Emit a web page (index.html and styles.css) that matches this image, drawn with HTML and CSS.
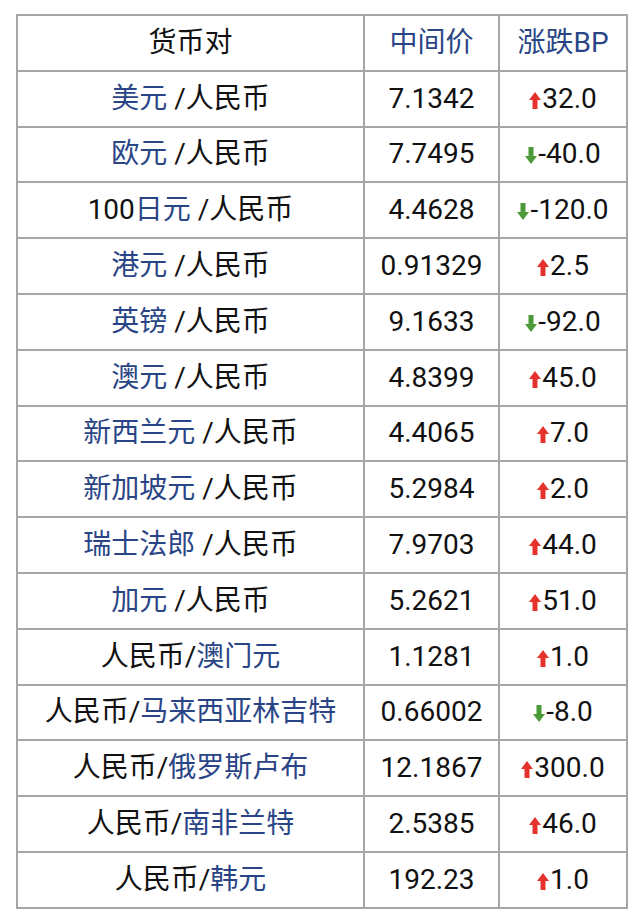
FILE: index.html
```html
<!DOCTYPE html>
<html lang="zh-CN">
<head>
<meta charset="utf-8">
<link rel="stylesheet" href="styles.css">
</head>
<body>
<table class="rates">
  <colgroup><col class="c1"><col class="c2"><col class="c3"></colgroup>
  <tr><th>货币对</th><th class="blue">中间价</th><th class="blue">涨跌BP</th></tr>
  <tr><td><span class="blue">美元</span> /人民币</td><td>7.1342</td><td><svg class="up" viewBox="0 0 12 17"><path d="M6 0L12 8H8.5V17H3.5V8H0Z"/></svg>32.0</td></tr>
  <tr><td><span class="blue">欧元</span> /人民币</td><td>7.7495</td><td><svg class="down" viewBox="0 0 12 17"><path d="M6 17L12 9H8.5V0H3.5V9H0Z"/></svg>-40.0</td></tr>
  <tr><td>100<span class="blue">日元</span> /人民币</td><td>4.4628</td><td><svg class="down" viewBox="0 0 12 17"><path d="M6 17L12 9H8.5V0H3.5V9H0Z"/></svg>-120.0</td></tr>
  <tr><td><span class="blue">港元</span> /人民币</td><td>0.91329</td><td><svg class="up" viewBox="0 0 12 17"><path d="M6 0L12 8H8.5V17H3.5V8H0Z"/></svg>2.5</td></tr>
  <tr><td><span class="blue">英镑</span> /人民币</td><td>9.1633</td><td><svg class="down" viewBox="0 0 12 17"><path d="M6 17L12 9H8.5V0H3.5V9H0Z"/></svg>-92.0</td></tr>
  <tr><td><span class="blue">澳元</span> /人民币</td><td>4.8399</td><td><svg class="up" viewBox="0 0 12 17"><path d="M6 0L12 8H8.5V17H3.5V8H0Z"/></svg>45.0</td></tr>
  <tr><td><span class="blue">新西兰元</span> /人民币</td><td>4.4065</td><td><svg class="up" viewBox="0 0 12 17"><path d="M6 0L12 8H8.5V17H3.5V8H0Z"/></svg>7.0</td></tr>
  <tr><td><span class="blue">新加坡元</span> /人民币</td><td>5.2984</td><td><svg class="up" viewBox="0 0 12 17"><path d="M6 0L12 8H8.5V17H3.5V8H0Z"/></svg>2.0</td></tr>
  <tr><td><span class="blue">瑞士法郎</span> /人民币</td><td>7.9703</td><td><svg class="up" viewBox="0 0 12 17"><path d="M6 0L12 8H8.5V17H3.5V8H0Z"/></svg>44.0</td></tr>
  <tr><td><span class="blue">加元</span> /人民币</td><td>5.2621</td><td><svg class="up" viewBox="0 0 12 17"><path d="M6 0L12 8H8.5V17H3.5V8H0Z"/></svg>51.0</td></tr>
  <tr><td>人民币/<span class="blue">澳门元</span></td><td>1.1281</td><td><svg class="up" viewBox="0 0 12 17"><path d="M6 0L12 8H8.5V17H3.5V8H0Z"/></svg>1.0</td></tr>
  <tr><td>人民币/<span class="blue">马来西亚林吉特</span></td><td>0.66002</td><td><svg class="down" viewBox="0 0 12 17"><path d="M6 17L12 9H8.5V0H3.5V9H0Z"/></svg>-8.0</td></tr>
  <tr><td>人民币/<span class="blue">俄罗斯卢布</span></td><td>12.1867</td><td><svg class="up" viewBox="0 0 12 17"><path d="M6 0L12 8H8.5V17H3.5V8H0Z"/></svg>300.0</td></tr>
  <tr><td>人民币/<span class="blue">南非兰特</span></td><td>2.5385</td><td><svg class="up" viewBox="0 0 12 17"><path d="M6 0L12 8H8.5V17H3.5V8H0Z"/></svg>46.0</td></tr>
  <tr><td>人民币/<span class="blue">韩元</span></td><td>192.23</td><td><svg class="up" viewBox="0 0 12 17"><path d="M6 0L12 8H8.5V17H3.5V8H0Z"/></svg>1.0</td></tr>
</table>
</body>
</html>
```
FILE: styles.css
```css
html, body {
  margin: 0;
  padding: 0;
  background: #ffffff;
}
body {
  padding: 14px 0 0 16px;
  font-family: Roboto, "Noto Sans CJK SC", sans-serif;
  color: #111111;
}
.rates {
  border-collapse: collapse;
  table-layout: fixed;
  width: 610px;
  font-size: 28px;
}
.c1 { width: 347px; }
.c2 { width: 135px; }
.c3 { width: 128px; }
.rates th,
.rates td {
  border: 2px solid #a6a6a6;
  height: 53.8px;
  padding: 0;
  text-align: center;
  vertical-align: middle;
  font-weight: normal;
  white-space: nowrap;
  line-height: 1;
}
.blue { color: #2a4586; }
.rates svg {
  width: 12px;
  height: 17px;
  margin-right: 1px;
  vertical-align: -1px;
}
.up { fill: #e5322d; }
.down { fill: #4b9a37; }
```
